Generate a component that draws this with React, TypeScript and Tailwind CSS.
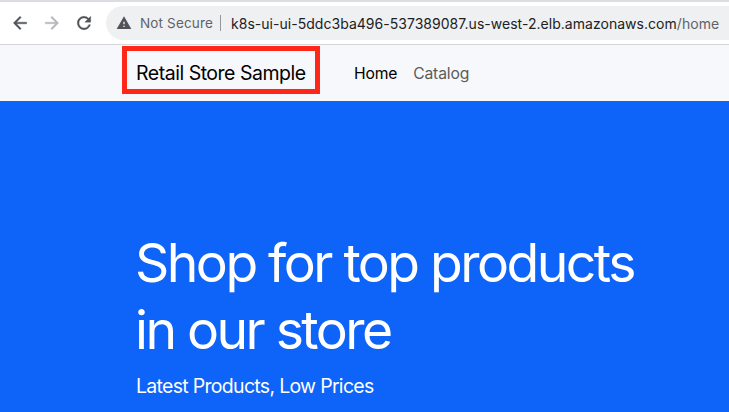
import React from "react";
import { MdWarning } from "react-icons/md";

function ToolbarIcon({ d, className }: { d: string; className: string }) {
  return (
    <svg className={`size-5 shrink-0 ${className}`} viewBox="0 0 24 24" fill="currentColor" stroke="currentColor" strokeWidth="0.45">
      <path d={d} />
    </svg>
  );
}

export default function App() {
  return (
    <div className="flex h-[412px] w-[729px] flex-col overflow-hidden bg-white font-['Inter',sans-serif] whitespace-nowrap">
      <div className="flex h-[45px] shrink-0 items-center border-t-2 border-b border-t-[#dadde2] border-b-[#d5d7da] pl-[10px]">
        <ToolbarIcon className="mr-3 text-[#505357]" d="M20 11H7.83l5.59-5.59L12 4l-8 8 8 8 1.41-1.41L7.83 13H20z" />
        <ToolbarIcon className="mr-3 text-[#b5b7ba]" d="m12 4-1.41 1.41L16.17 11H4v2h12.17l-5.58 5.59L12 20l8-8z" />
        <ToolbarIcon
          className="text-[#505357]"
          d="M17.65 6.35A7.958 7.958 0 0 0 12 4c-4.42 0-7.99 3.58-7.99 8s3.57 8 7.99 8c3.73 0 6.84-2.55 7.73-6h-2.08A5.99 5.99 0 0 1 12 18c-3.31 0-6-2.69-6-6s2.69-6 6-6c1.66 0 3.14.69 4.22 1.78L13 11h7V4z"
        />
        <div className="ml-3 flex h-[34px] w-[640px] shrink-0 items-center rounded-l-full bg-[#eff0f2] pl-[10px]">
          <MdWarning className="size-4 shrink-0 text-[#505357]" />
          <span className="ml-2 w-[74px] text-[13.5px] tracking-[0.15px] text-[#5f6368]">Not Secure</span>
          <span className="ml-[6px] h-4 w-px bg-[#94979b]" />
          <span className="ml-[10px] text-[14px] tracking-[0.03px] text-[#202124]">
            k8s-ui-ui-5ddc3ba496-537389087.us-west-2.elb.amazonaws.com<span className="text-[#5f6368]">/home</span>
          </span>
        </div>
      </div>
      <nav className="flex h-14 shrink-0 items-center bg-[#f7f8fb] pl-[122px]">
        <div className="-mt-[6px] flex h-[48px] w-[198px] items-center border-[5px] border-[#ff2718] pt-[8px] pl-[9px] text-[19.5px] tracking-[-0.48px]">
          Retail Store Sample
        </div>
        <span className="ml-[34px] pt-[2px] text-[15.7px] tracking-[-0.2px]">Home</span>
        <span className="ml-4 pt-[2px] text-[15.7px] tracking-[-0.15px] text-[#5a5b5c]">Catalog</span>
      </nav>
      <main className="grow bg-[#0e63f8] pl-[135px] pt-[128px] text-white">
        <h1 className="text-[53.5px] leading-[67px] font-[390] tracking-[-2.55px]">
          Shop for top products
          <br />
          in our store
        </h1>
        <p className="mt-[9px] ml-px text-[19.5px] leading-7 tracking-[-0.7px]">Latest Products, Low Prices</p>
      </main>
    </div>
  );
}
